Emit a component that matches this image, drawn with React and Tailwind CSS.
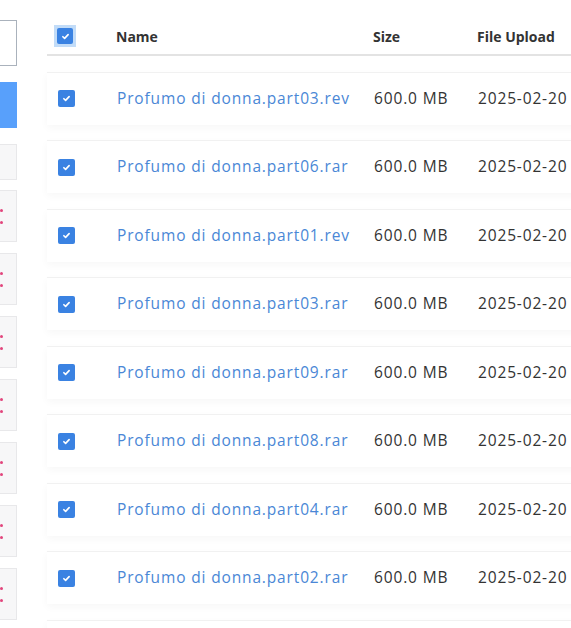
import React from "react";

const files = [
  "Profumo di donna.part03.rev",
  "Profumo di donna.part06.rar",
  "Profumo di donna.part01.rev",
  "Profumo di donna.part03.rar",
  "Profumo di donna.part09.rar",
  "Profumo di donna.part08.rar",
  "Profumo di donna.part04.rar",
  "Profumo di donna.part02.rar",
];

function Check({ size = "w-[17px] h-[17px]" }) {
  return (
    <span className={`${size} rounded-[2px] bg-[#3a82e2] flex items-center justify-center`}>
      <svg viewBox="0 0 12 12" className="w-[9px] h-[9px]" fill="none" stroke="white" strokeWidth="2.2" strokeLinecap="round" strokeLinejoin="round">
        <path d="M2.5 6.3l2.3 2.2 4.7-5" />
      </svg>
    </span>
  );
}

function SideCard() {
  return (
    <div className="relative h-[52px] shrink-0 bg-[#f7f7f8] border border-l-0 border-[#e8e8ea]">
      <span className="absolute left-0 top-[18px] w-[3px] h-[3px] rounded-full bg-[#e2457c]" />
      <span className="absolute left-0 top-[30px] w-[3px] h-[3px] rounded-full bg-[#e2457c]" />
    </div>
  );
}

export default function App() {
  return (
    <div className="flex h-[628px] w-[571px] overflow-hidden bg-white" style={{ fontFamily: '"Open Sans", sans-serif' }}>
      {/* clipped sidebar */}
      <div className="w-[17px] shrink-0 flex flex-col pt-[20px]">
        <div className="h-[46px] shrink-0 bg-white border border-l-0 border-[#aab2bc]" />
        <div className="h-[46px] shrink-0 mt-[16px] bg-[#58a0fb]" />
        <div className="h-[36px] shrink-0 mt-[16px] bg-[#f7f7f8] border border-l-0 border-[#e8e8ea]" />
        <div className="flex flex-col shrink-0 gap-[11px] mt-[10px]">
          {Array.from({ length: 8 }).map((_, i) => (
            <SideCard key={i} />
          ))}
        </div>
      </div>

      {/* file table */}
      <div className="ml-[30px] w-[620px] shrink-0 pt-[18px]">
        <div className="h-[38px] flex items-center border-b-2 border-[#e3e3e3] text-[14px] font-bold text-[#333]">
          <div className="w-[69px] pl-[7px] flex">
            <span className="w-[22px] h-[22px] bg-[#c2dcf8] flex items-center justify-center">
              <Check size="w-[16px] h-[16px]" />
            </span>
          </div>
          <div className="w-[257px]">Name</div>
          <div className="w-[104px]">Size</div>
          <div>File Upload</div>
        </div>

        <div className="flex flex-col gap-[15.5px] mt-[15.5px]">
          {files.map((f) => (
            <div
              key={f}
              className="h-[53px] shrink-0 flex items-center bg-white border-t border-[#f1f1f1] shadow-[0_3px_8px_rgba(0,0,0,0.035)] text-[15.5px] tracking-[0.85px]"
            >
              <div className="w-[70px] pl-[11px] flex">
                <Check />
              </div>
              <div className="w-[257px] text-[#4a87d6] whitespace-nowrap">{f}</div>
              <div className="w-[104px] text-[#333] whitespace-nowrap">600.0 MB</div>
              <div className="text-[#333] whitespace-nowrap">2025-02-20</div>
            </div>
          ))}
          <div className="h-[53px] shrink-0 bg-white border-t border-[#f1f1f1] shadow-[0_3px_8px_rgba(0,0,0,0.035)]" />
        </div>
      </div>
    </div>
  );
}
